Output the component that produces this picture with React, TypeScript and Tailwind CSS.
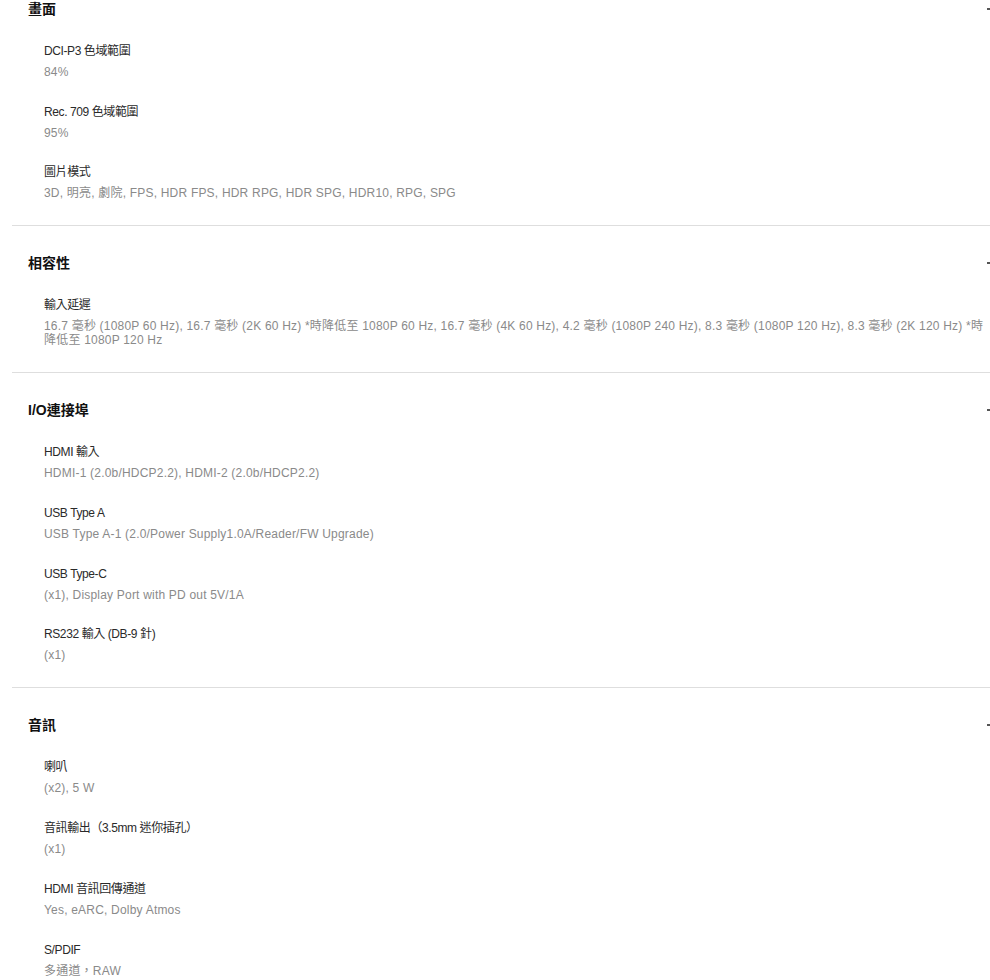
import React from 'react';

interface SpecItem {
  label: string;
  value: string;
}

interface SpecSection {
  title: string;
  items: SpecItem[];
}

const sections: SpecSection[] = [
  {
    title: '畫面',
    items: [
      { label: 'DCI-P3 色域範圍', value: '84%' },
      { label: 'Rec. 709 色域範圍', value: '95%' },
      { label: '圖片模式', value: '3D, 明亮, 劇院, FPS, HDR FPS, HDR RPG, HDR SPG, HDR10, RPG, SPG' },
    ],
  },
  {
    title: '相容性',
    items: [
      {
        label: '輸入延遲',
        value:
          '16.7 毫秒 (1080P 60 Hz), 16.7 毫秒 (2K 60 Hz) *時降低至 1080P 60 Hz, 16.7 毫秒 (4K 60 Hz), 4.2 毫秒 (1080P 240 Hz), 8.3 毫秒 (1080P 120 Hz), 8.3 毫秒 (2K 120 Hz) *時降低至 1080P 120 Hz',
      },
    ],
  },
  {
    title: 'I/O連接埠',
    items: [
      { label: 'HDMI 輸入', value: 'HDMI-1 (2.0b/HDCP2.2), HDMI-2 (2.0b/HDCP2.2)' },
      { label: 'USB Type A', value: 'USB Type A-1 (2.0/Power Supply1.0A/Reader/FW Upgrade)' },
      { label: 'USB Type-C', value: '(x1), Display Port with PD out 5V/1A' },
      { label: 'RS232 輸入 (DB-9 針)', value: '(x1)' },
    ],
  },
  {
    title: '音訊',
    items: [
      { label: '喇叭', value: '(x2), 5 W' },
      { label: '音訊輸出（3.5mm 迷你插孔）', value: '(x1)' },
      { label: 'HDMI 音訊回傳通道', value: 'Yes, eARC, Dolby Atmos' },
      { label: 'S/PDIF', value: '多通道，RAW' },
    ],
  },
];

const font = 'font-["Liberation_Sans","Noto_Sans_CJK_TC",sans-serif]';

const Section: React.FC<{ section: SpecSection }> = ({ section }) => (
  <div className="border-b border-[#dedede] pt-[27px] pb-[25px]">
    <div className="flex items-center justify-between">
      <h2 className="pl-4 text-[14px] leading-[20px] font-bold text-[#111]">{section.title}</h2>
      <div className="h-[2px] w-[3px] bg-[#555]" />
    </div>
    <div className="mt-6 flex flex-col gap-[24.7px] pl-8">
      {section.items.map((item, i) => (
        <div key={i}>
          <div className="text-[12px] leading-[16px] tracking-[-0.4px] text-[#2a2a2a]">{item.label}</div>
          <div className="mt-[6px] text-[12px] leading-[14px] tracking-[0.2px] text-[#8a8a8a]">{item.value}</div>
        </div>
      ))}
    </div>
  </div>
);

export default function App() {
  return (
    <div className={`min-h-screen w-full overflow-hidden bg-white ${font}`}>
      <div className="-mt-[28px] pl-3">
        {sections.map((s, i) => (
          <Section key={i} section={s} />
        ))}
      </div>
    </div>
  );
}
